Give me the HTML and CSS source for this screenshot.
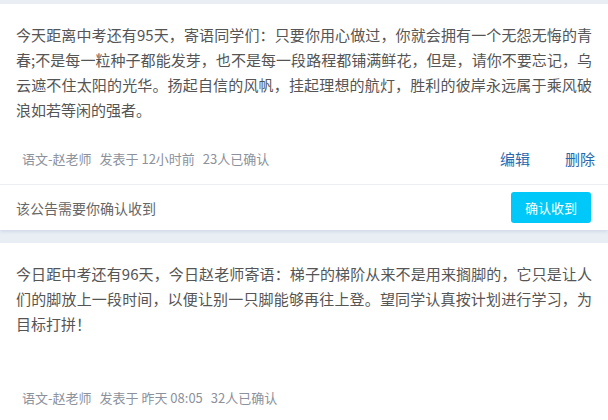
FILE: index.html
```html
<!DOCTYPE html>
<html lang="zh-CN">
<head>
  <meta charset="UTF-8">
  <title>公告</title>
  <meta name="viewport" content="width=device-width, initial-scale=1.0">
  <link rel="stylesheet" href="styles.css">
</head>
<body>
  <div class="notice">
    <div class="notice-body">
      <p class="notice-text">今天距离中考还有95天，寄语同学们：只要你用心做过，你就会拥有一个无怨无悔的青春;不是每一粒种子都能发芽，也不是每一段路程都铺满鲜花，但是，请你不要忘记，乌云遮不住太阳的光华。扬起自信的风帆，挂起理想的航灯，胜利的彼岸永远属于乘风破浪如若等闲的强者。</p>
      <div class="notice-meta">
        <span class="meta-info"><span>语文-赵老师</span><span>发表于 12小时前</span><span>23人已确认</span></span>
        <span class="meta-actions">
          <a class="action">编辑</a>
          <a class="action">删除</a>
        </span>
      </div>
    </div>
    <div class="confirm-row">
      <span>该公告需要你确认收到</span>
      <button class="confirm-btn">确认收到</button>
    </div>
  </div>

  <div class="notice">
    <div class="notice-body">
      <p class="notice-text">今日距中考还有96天，今日赵老师寄语：梯子的梯阶从来不是用来搁脚的，它只是让人们的脚放上一段时间，以便让别一只脚能够再往上登。望同学认真按计划进行学习，为目标打拼！</p>
      <div class="notice-meta">
        <span class="meta-info"><span>语文-赵老师</span><span>发表于 昨天 08:05</span><span>32人已确认</span></span>
      </div>
    </div>
  </div>
</body>
</html>
```

FILE: styles.css
```css
body { margin: 0; padding-top: 4px; background: #e9eef5; font-family: "Noto Sans CJK SC", "Noto Sans", sans-serif; }
.notice { background: #fff; margin-bottom: 13px; box-shadow: 0 2px 3px rgba(120, 140, 170, 0.18); }
.notice-body { padding: 18px 16px 15px; }
.notice-text { margin: 0; min-height: 101px; font-size: 15px; line-height: 25px; color: #555; text-align: justify; }
.notice-meta { display: flex; align-items: center; justify-content: space-between; margin-top: 24px; height: 22px; padding-left: 6px; }
.meta-info { display: flex; gap: 8px; font-size: 13px; color: #8c919b; }
.meta-actions { display: flex; gap: 35px; margin-right: -3px; }
.action { font-size: 15px; color: #2767ad; cursor: pointer; }
.confirm-row { display: flex; align-items: center; justify-content: space-between; height: 45px; padding: 0 17px 0 16px; border-top: 1px solid #eceef1; font-size: 14px; color: #666; }
.confirm-btn { width: 80px; height: 31px; border: none; border-radius: 3px; background: #00c8f8; color: #fff; font-size: 13px; font-family: inherit; }
```
